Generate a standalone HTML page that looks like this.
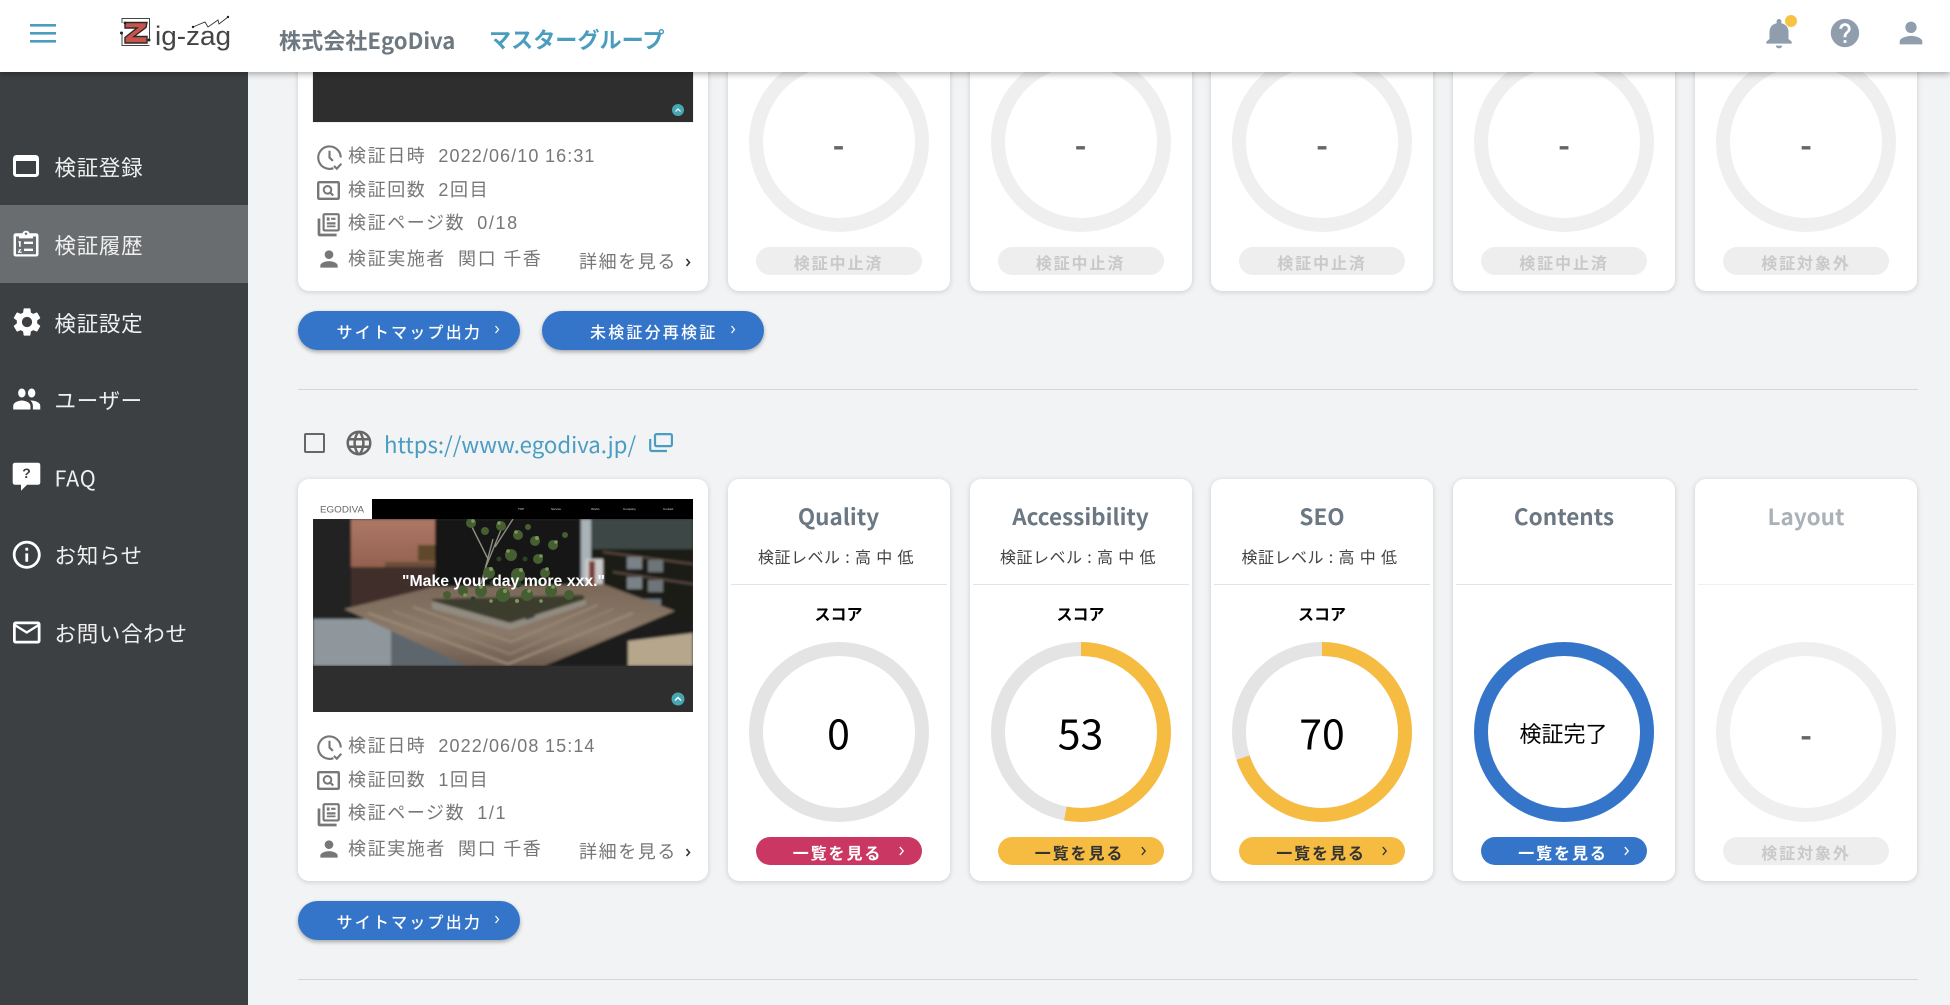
<!DOCTYPE html>
<html lang="ja"><head><meta charset="utf-8"><title>Zig-zag</title>
<style>
*{box-sizing:border-box}
html,body{margin:0;padding:0;width:1950px;height:1005px;overflow:hidden;background:#f1f3f5;font-family:"Noto Sans CJK JP","Liberation Sans",sans-serif}
.t{position:absolute;white-space:nowrap;line-height:1;transform:translateY(-50%)}
.c{position:absolute;white-space:nowrap;line-height:1;transform:translate(-50%,-50%)}
svg{position:absolute;display:block;overflow:visible}
#hdr{position:absolute;left:0;top:0;width:1950px;height:72px;background:#fff;box-shadow:0 2px 6px rgba(0,0,0,.32);z-index:5}
#side{position:absolute;left:0;top:72px;width:248px;height:933px;background:#3c4043;z-index:4}
#act{position:absolute;left:0;top:133px;width:248px;height:78px;background:#6a6d70}
.m{color:#f0f0f0;font-size:21.5px;letter-spacing:.7px;left:54.5px}
.card{position:absolute;width:222px;height:402px;background:#fff;border-radius:11px;box-shadow:0 1px 6px rgba(0,0,0,.16)}
.ti{left:111px;top:37px;font-size:22.5px;font-weight:700;color:#6b7883}
.lv{left:108.5px;top:77px;font-size:16px;color:#444;letter-spacing:.5px;word-spacing:.7px}
.dv{position:absolute;left:3px;top:105px;width:216px;height:1px;background:#e2e3e5}
.sc{left:111px;top:134px;font-size:16px;font-weight:700;color:#000}
.num{left:111px;top:253px;font-size:41px;color:#000}
.dash{left:111px;top:255px;font-size:32px;font-weight:700;color:#666}
.pill{position:absolute;left:28px;top:358px;width:166px;height:28px;border-radius:14px;color:#fff}
.pill .x{position:absolute;left:82px;top:15px;font-size:16px;font-weight:700;letter-spacing:1.9px;line-height:1;white-space:nowrap;transform:translate(-50%,-50%)}
.pill .a{position:absolute;left:142px;top:9px}
.off{background:#eee;color:#c9c9c9}
.off .x{left:83px}
.inf{left:348px;color:#777;font-size:18px;letter-spacing:1.6px;word-spacing:-.6px;font-family:"Liberation Sans","Noto Sans CJK JP",sans-serif}
.inf i{font-style:normal;letter-spacing:1.1px}
.btn{position:absolute;height:39px;border-radius:20px;background:#3575c9;box-shadow:0 2px 4px rgba(0,0,0,.32);color:#fff}
.btn span{position:absolute;top:20px;transform:translateY(-50%);font-size:16px;font-weight:500;letter-spacing:2.2px;line-height:1;white-space:nowrap}
.ln{position:absolute;left:298px;width:1620px;height:1px;background:#d5d7d9}
</style></head><body>

<!-- ===== TOP ROW ===== -->
<div class="card" style="left:298px;top:-111px;width:410px"></div>
<div style="position:absolute;left:313px;top:60px;width:380px;height:62px;background:#2e2e2e;box-shadow:0 0 1px rgba(0,0,0,.3)"><div style="position:absolute;left:0;top:0;width:380px;height:16px;background:linear-gradient(#3a342e,#2e2e2e)"></div><div style="position:absolute;left:359px;top:44px;width:12px;height:12px;border-radius:50%;background:#46a6b3"></div><svg style="left:362px;top:47.5px" width="6" height="4" viewBox="0 0 6 4" fill="none" stroke="#fff" stroke-width="1.2"><path d="M.5 3.500l2.500-2.500 2.500 2.500"/></svg></div>

<svg style="left:315.5px;top:143.500px" width="27" height="27" viewBox="0 0 24 24" fill="none" stroke="#777" stroke-width="1.9"><path d="M15.500 21.500A10 10 0 1 1 22 12"/><path d="M12 6v6l3 3"/><path d="M16 19.500l2.500 2.500 4-4.500"/></svg>
<svg style="left:317px;top:181px" width="23" height="19" viewBox="0 0 23 19" fill="none" stroke="#777"><rect x="1.200" y="1.200" width="20.600" height="16.600" rx="1" stroke-width="2.400"/><circle cx="10.500" cy="8.800" r="3.800" stroke-width="2"/><path d="M13.200 11.500l3 3" stroke-width="2.200"/></svg>
<svg style="left:316px;top:211.500px" width="26" height="26" viewBox="0 0 24 24"><path fill="#777" d="M4 6H1.500v14.500c0 1.100.9 2 2 2H19V20H4V6zm16-5H8c-1.100 0-2 .9-2 2v13c0 1.100.9 2 2 2h12c1.100 0 2-.9 2-2V3c0-1.100-.9-2-2-2zm0 15H8V3h12v13zM10 5h2.500v3H10zm4 .3h4v2h-4zM10 9.500h8v2h-8zm0 3h8v1.600h-8z"/></svg>
<svg style="left:316px;top:246px" width="26" height="26" viewBox="0 0 24 24"><path fill="#777" d="M12 12c2.210 0 4-1.790 4-4s-1.790-4-4-4-4 1.790-4 4 1.790 4 4 4zm0 2c-2.670 0-8 1.340-8 4v2h16v-2c0-2.660-5.330-4-8-4z"/></svg>
<div class="t inf" style="top:156px">検証日時&nbsp; <i>2022/06/10 16:31</i></div>
<div class="t inf" style="top:189.500px">検証回数&nbsp; 2回目</div>
<div class="t inf" style="top:222.500px">検証ページ数&nbsp; 0/18</div>
<div class="t inf" style="top:259px">検証実施者&nbsp; 関口 千香</div>
<div class="t inf" style="left:579px;top:262px">詳細を見る</div>
<svg style="left:685px;top:258px" width="6" height="9" viewBox="0 0 6 9" fill="none" stroke="#333" stroke-width="1.600"><path d="M1.500 1l3 3.500-3 3.500"/></svg>

<div class="card" style="left:727.500px;top:-111px"><svg style="left:21px;top:163px" width="180" height="180"><circle cx="90" cy="90" r="83" fill="none" stroke="#efefef" stroke-width="14"/></svg><div class="c dash">-</div><div class="pill off"><div class="x">検証中止済</div></div></div>
<div class="card" style="left:969.500px;top:-111px"><svg style="left:21px;top:163px" width="180" height="180"><circle cx="90" cy="90" r="83" fill="none" stroke="#efefef" stroke-width="14"/></svg><div class="c dash">-</div><div class="pill off"><div class="x">検証中止済</div></div></div>
<div class="card" style="left:1211px;top:-111px"><svg style="left:21px;top:163px" width="180" height="180"><circle cx="90" cy="90" r="83" fill="none" stroke="#efefef" stroke-width="14"/></svg><div class="c dash">-</div><div class="pill off"><div class="x">検証中止済</div></div></div>
<div class="card" style="left:1453px;top:-111px"><svg style="left:21px;top:163px" width="180" height="180"><circle cx="90" cy="90" r="83" fill="none" stroke="#efefef" stroke-width="14"/></svg><div class="c dash">-</div><div class="pill off"><div class="x">検証中止済</div></div></div>
<div class="card" style="left:1695px;top:-111px"><svg style="left:21px;top:163px" width="180" height="180"><circle cx="90" cy="90" r="83" fill="none" stroke="#efefef" stroke-width="14"/></svg><div class="c dash">-</div><div class="pill off"><div class="x">検証対象外</div></div></div>

<div class="btn" style="left:298px;top:311px;width:222px"><span style="left:38.500px">サイトマップ出力</span><svg style="left:196px;top:14px" width="6" height="9" viewBox="0 0 6 9" fill="none" stroke="#fff" stroke-width="1.200"><path d="M1.500 1l3 3.500-3 3.500"/></svg></div>
<div class="btn" style="left:542px;top:311px;width:222px"><span style="left:48px">未検証分再検証</span><svg style="left:188px;top:14px" width="6" height="9" viewBox="0 0 6 9" fill="none" stroke="#fff" stroke-width="1.200"><path d="M1.500 1l3 3.500-3 3.500"/></svg></div>
<div class="ln" style="top:389px"></div>

<!-- ===== URL ROW ===== -->
<div style="position:absolute;left:304px;top:433px;width:21px;height:20px;border:2.500px solid #666;border-radius:2px"></div>
<svg style="left:344px;top:428px" width="30" height="30" viewBox="0 0 24 24"><path fill="#666" d="M11.990 2C6.470 2 2 6.480 2 12s4.470 10 9.990 10C17.520 22 22 17.520 22 12S17.520 2 11.990 2zm6.930 6h-2.950c-.32-1.250-.78-2.450-1.380-3.560 1.840.63 3.370 1.910 4.330 3.560zM12 4.040c.83 1.200 1.480 2.530 1.910 3.960h-3.820c.43-1.430 1.080-2.760 1.910-3.960zM4.260 14C4.100 13.360 4 12.690 4 12s.1-1.360.26-2h3.380c-.08.66-.14 1.320-.14 2 0 .68.06 1.340.14 2H4.260zm.82 2h2.950c.32 1.250.78 2.450 1.380 3.560-1.840-.63-3.370-1.900-4.330-3.560zm2.950-8H5.080c.96-1.660 2.490-2.930 4.330-3.560C8.810 5.550 8.350 6.750 8.030 8zM12 19.960c-.83-1.200-1.480-2.530-1.910-3.960h3.820c-.43 1.430-1.080 2.760-1.910 3.960zM14.340 14H9.660c-.09-.66-.16-1.320-.16-2 0-.68.07-1.350.16-2h4.680c.09.65.16 1.320.16 2 0 .68-.07 1.340-.16 2zm.25 5.560c.6-1.110 1.060-2.310 1.380-3.560h2.950c-.96 1.650-2.490 2.930-4.330 3.560zM16.360 14c.08-.66.14-1.320.14-2 0-.68-.06-1.340-.14-2h3.380c.16.64.26 1.310.26 2s-.1 1.360-.26 2h-3.380z"/></svg>
<div class="t" style="left:384px;top:444px;font-size:22.200px;color:#4b9dc0">https://www.egodiva.jp/</div>
<svg style="left:649px;top:433px" width="24" height="20" viewBox="0 0 24 20" fill="none" stroke="#4b9dc0" stroke-width="2.200"><rect x="6" y="1.100" width="16.900" height="12" rx="1.500"/><path d="M1.200 6v10.500c0 1 .8 1.500 1.500 1.500H18"/></svg>

<!-- ===== BOTTOM ROW ===== -->
<div class="card" style="left:298px;top:479px;width:410px"></div>
<svg style="left:313px;top:499px" width="380" height="213" viewBox="0 0 380 213">
<defs><filter id="b"><feGaussianBlur stdDeviation="1.200"/></filter><filter id="b2"><feGaussianBlur stdDeviation=".35"/></filter><linearGradient id="tb" x1="0" y1="0" x2="0" y2="1"><stop offset="0" stop-color="#7a6858"/><stop offset=".6" stop-color="#8b7969"/><stop offset="1" stop-color="#6d5c4f"/></linearGradient><linearGradient id="wl" x1="0" y1="0" x2="0" y2="1"><stop offset="0" stop-color="#ad7766"/><stop offset="1" stop-color="#94614f"/></linearGradient><clipPath id="cp"><rect x="0" y="20" width="380" height="147"/></clipPath></defs>
<rect width="380" height="213" fill="#2e2e2e"/>
<g clip-path="url(#cp)"><g filter="url(#b)">
<rect y="20" width="380" height="147" fill="#1e1b1a"/>
<rect x="0" y="20" width="38" height="100" fill="#232324"/>
<rect x="38" y="20" width="84" height="48" fill="url(#wl)"/>
<rect x="38" y="68" width="84" height="40" fill="#3f2f2a"/>
<rect x="105" y="46" width="29" height="16" fill="#5e4a2a"/>
<rect x="72" y="63" width="70" height="5" fill="#6a4f38"/>
<rect x="122" y="20" width="146" height="70" fill="#171615"/>
<rect x="268" y="20" width="10" height="62" fill="#a9b2b7"/>
<rect x="278" y="20" width="102" height="38" fill="#3c4745"/>
<rect x="278" y="50" width="102" height="70" fill="#1c1a19"/>
<rect x="272" y="60" width="18" height="26" fill="#c9c9c9"/><rect x="276" y="62" width="6" height="24" fill="#7a3a35"/>
<path d="M290 52l90 12v2l-90-12zM300 72l80 12v2l-80-12z" fill="#5a4a40"/>
<rect x="314" y="58" width="15" height="12" fill="#7a8287"/><rect x="335" y="61" width="15" height="12" fill="#6e7478"/><rect x="314" y="78" width="15" height="12" fill="#7a8287"/><rect x="335" y="81" width="15" height="12" fill="#6e7478"/><rect x="330" y="100" width="18" height="8" fill="#6e7478"/>
<path d="M0 120l78 0 0 47-78 0z" fill="#8f979c"/>
<path d="M78 128l80 39-80 0z" fill="#5d666c"/>
<path d="M315 142l65-8v33h-65z" fill="#b5a68c"/>
<path d="M31 110L120 88 290 85 362 112 231 167 154 167z" fill="url(#tb)"/>
<path d="M55 114L195 165 320 114" fill="none" stroke="#9a8874" stroke-width="2.500"/>
<path d="M80 112L197 155 300 110" fill="none" stroke="#928170" stroke-width="2"/>
<path d="M100 108L198 143 285 106" fill="none" stroke="#9a8874" stroke-width="2"/>
<path d="M119 100L270 96 273 103 197 131 120 108z" fill="#3e3c2e"/>
<path d="M119 102L197 124 273 100 273 106 197 131 119 110z" fill="#918b80"/>
<path d="M150 101l8 3-1 3-8-3zM165 107l10 3-1 3-10-3zM212 118l9-3 1 3-9 3z" fill="#3a3a36"/>
</g>
<g filter="url(#b2)">
<path d="M168 85L180 40M175 60L155 20M182 48L200 20M172 70L190 26" stroke="#8f8f80" stroke-width="1.400" fill="none"/>
<g fill="#445f33"><circle cx="158" cy="24" r="5"/><circle cx="172" cy="32" r="4"/><circle cx="188" cy="27" r="5"/><circle cx="205" cy="36" r="5"/><circle cx="222" cy="42" r="5"/><circle cx="240" cy="46" r="5"/><circle cx="252" cy="36" r="3"/><circle cx="215" cy="28" r="3"/><circle cx="198" cy="56" r="6"/><circle cx="225" cy="60" r="5"/><circle cx="176" cy="74" r="6"/><circle cx="205" cy="76" r="7"/><circle cx="232" cy="74" r="5"/><circle cx="150" cy="92" r="5"/><circle cx="168" cy="92" r="6"/><circle cx="190" cy="96" r="7"/><circle cx="214" cy="96" r="6"/><circle cx="238" cy="92" r="6"/><circle cx="256" cy="96" r="5"/><circle cx="134" cy="96" r="4"/></g>
<g fill="#7a9a55"><circle cx="160" cy="22" r="1.800"/><circle cx="186" cy="24" r="1.800"/><circle cx="203" cy="33" r="1.800"/><circle cx="224" cy="39" r="2"/><circle cx="243" cy="43" r="1.800"/><circle cx="195" cy="52" r="1.800"/><circle cx="228" cy="57" r="1.800"/><circle cx="178" cy="70" r="2"/><circle cx="208" cy="71" r="2"/><circle cx="234" cy="70" r="1.800"/><circle cx="168" cy="88" r="1.800"/><circle cx="192" cy="92" r="2"/><circle cx="216" cy="92" r="1.800"/><circle cx="240" cy="88" r="1.800"/><circle cx="152" cy="96" r="1.800"/><circle cx="204" cy="102" r="2"/><circle cx="178" cy="102" r="1.800"/><circle cx="228" cy="102" r="1.800"/></g>
<g fill="#2b4326"><circle cx="205" cy="85" r="3.500"/><circle cx="180" cy="84" r="3"/><circle cx="226" cy="84" r="3"/><circle cx="160" cy="100" r="2.500"/><circle cx="212" cy="60" r="2.500"/><circle cx="186" cy="60" r="2.500"/></g>
</g></g>
<rect width="380" height="20" fill="#000"/>
<rect width="59" height="20" fill="#fff"/>
<text x="7" y="13.500" font-family="Liberation Sans" font-size="9" fill="#666" textLength="44" lengthAdjust="spacingAndGlyphs">EGODIVA</text>
<g font-family="Liberation Sans" font-size="3" fill="#ddd"><text x="205" y="11">TOP</text><text x="238" y="11">Service</text><text x="278" y="11">Works</text><text x="310" y="11">Company</text><text x="350" y="11">Contact</text></g>
<text x="190.500" y="87" text-anchor="middle" font-family="Liberation Sans" font-size="16" font-weight="700" fill="#fff" textLength="203" lengthAdjust="spacingAndGlyphs">"Make your day more xxx."</text>
<circle cx="365" cy="200" r="6.500" fill="#46a6b3"/><path d="M362 201.500l3-3 3 3" fill="none" stroke="#fff" stroke-width="1.400"/>
</svg>

<svg style="left:315.500px;top:733.500px" width="27" height="27" viewBox="0 0 24 24" fill="none" stroke="#777" stroke-width="1.900"><path d="M15.500 21.500A10 10 0 1 1 22 12"/><path d="M12 6v6l3 3"/><path d="M16 19.500l2.500 2.500 4-4.500"/></svg>
<svg style="left:317px;top:771px" width="23" height="19" viewBox="0 0 23 19" fill="none" stroke="#777"><rect x="1.200" y="1.200" width="20.600" height="16.600" rx="1" stroke-width="2.400"/><circle cx="10.500" cy="8.800" r="3.800" stroke-width="2"/><path d="M13.200 11.500l3 3" stroke-width="2.200"/></svg>
<svg style="left:316px;top:801.500px" width="26" height="26" viewBox="0 0 24 24"><path fill="#777" d="M4 6H1.500v14.500c0 1.100.9 2 2 2H19V20H4V6zm16-5H8c-1.100 0-2 .9-2 2v13c0 1.100.9 2 2 2h12c1.100 0 2-.9 2-2V3c0-1.100-.9-2-2-2zm0 15H8V3h12v13zM10 5h2.500v3H10zm4 .3h4v2h-4zM10 9.500h8v2h-8zm0 3h8v1.600h-8z"/></svg>
<svg style="left:316px;top:836px" width="26" height="26" viewBox="0 0 24 24"><path fill="#777" d="M12 12c2.210 0 4-1.790 4-4s-1.790-4-4-4-4 1.790-4 4 1.790 4 4 4zm0 2c-2.670 0-8 1.340-8 4v2h16v-2c0-2.660-5.330-4-8-4z"/></svg>
<div class="t inf" style="top:746px">検証日時&nbsp; <i>2022/06/08 15:14</i></div>
<div class="t inf" style="top:779.500px">検証回数&nbsp; 1回目</div>
<div class="t inf" style="top:812.500px">検証ページ数&nbsp; 1/1</div>
<div class="t inf" style="top:849px">検証実施者&nbsp; 関口 千香</div>
<div class="t inf" style="left:579px;top:852px">詳細を見る</div>
<svg style="left:685px;top:848px" width="6" height="9" viewBox="0 0 6 9" fill="none" stroke="#333" stroke-width="1.600"><path d="M1.500 1l3 3.500-3 3.500"/></svg>

<!-- Quality -->
<div class="card" style="left:727.500px;top:479px"><div class="c ti">Quality</div><div class="c lv">検証レベル : 高 中 低</div><div class="dv"></div><div class="c sc">スコア</div>
<svg style="left:21px;top:163px" width="180" height="180"><circle cx="90" cy="90" r="83" fill="none" stroke="#e4e4e4" stroke-width="14"/></svg><div class="c num">0</div>
<div class="pill" style="background:#cb3763"><div class="x">一覧を見る</div><svg class="a" width="7" height="10" viewBox="0 0 6 9" fill="none" stroke="#fff" stroke-width="1.200"><path d="M1.500 1l3 3.500-3 3.500"/></svg></div></div>
<!-- Accessibility -->
<div class="card" style="left:969.500px;top:479px"><div class="c ti">Accessibility</div><div class="c lv">検証レベル : 高 中 低</div><div class="dv"></div><div class="c sc">スコア</div>
<svg style="left:21px;top:163px" width="180" height="180"><circle cx="90" cy="90" r="83" fill="none" stroke="#e4e4e4" stroke-width="14"/><circle cx="90" cy="90" r="83" fill="none" stroke="#f6bc42" stroke-width="14" stroke-dasharray="276.400 245.100" transform="rotate(-90 90 90)"/></svg><div class="c num">53</div>
<div class="pill" style="background:#f6bc42;color:#333"><div class="x">一覧を見る</div><svg class="a" width="7" height="10" viewBox="0 0 6 9" fill="none" stroke="#333" stroke-width="1.200"><path d="M1.500 1l3 3.500-3 3.500"/></svg></div></div>
<!-- SEO -->
<div class="card" style="left:1211px;top:479px"><div class="c ti">SEO</div><div class="c lv">検証レベル : 高 中 低</div><div class="dv"></div><div class="c sc">スコア</div>
<svg style="left:21px;top:163px" width="180" height="180"><circle cx="90" cy="90" r="83" fill="none" stroke="#e4e4e4" stroke-width="14"/><circle cx="90" cy="90" r="83" fill="none" stroke="#f6bc42" stroke-width="14" stroke-dasharray="365 156.500" transform="rotate(-90 90 90)"/></svg><div class="c num">70</div>
<div class="pill" style="background:#f6bc42;color:#333"><div class="x">一覧を見る</div><svg class="a" width="7" height="10" viewBox="0 0 6 9" fill="none" stroke="#333" stroke-width="1.200"><path d="M1.500 1l3 3.500-3 3.500"/></svg></div></div>
<!-- Contents -->
<div class="card" style="left:1453px;top:479px"><div class="c ti">Contents</div><div class="dv"></div>
<svg style="left:21px;top:163px" width="180" height="180"><circle cx="90" cy="90" r="83" fill="none" stroke="#3575c9" stroke-width="14"/></svg><div class="c" style="left:110.500px;top:254px;font-size:22px;color:#000">検証完了</div>
<div class="pill" style="background:#3575c9"><div class="x">一覧を見る</div><svg class="a" width="7" height="10" viewBox="0 0 6 9" fill="none" stroke="#fff" stroke-width="1.200"><path d="M1.500 1l3 3.500-3 3.500"/></svg></div></div>
<!-- Layout -->
<div class="card" style="left:1695px;top:479px"><div class="c ti" style="color:#aab1b7">Layout</div><div class="dv" style="background:#eeeff0"></div>
<svg style="left:21px;top:163px" width="180" height="180"><circle cx="90" cy="90" r="83" fill="none" stroke="#efefef" stroke-width="14"/></svg><div class="c dash">-</div>
<div class="pill off"><div class="x">検証対象外</div></div></div>

<div class="btn" style="left:298px;top:901px;width:222px"><span style="left:38.500px">サイトマップ出力</span><svg style="left:196px;top:14px" width="6" height="9" viewBox="0 0 6 9" fill="none" stroke="#fff" stroke-width="1.200"><path d="M1.500 1l3 3.500-3 3.500"/></svg></div>
<div class="ln" style="top:979px"></div>

<!-- ===== HEADER ===== -->
<div id="hdr">
<svg style="left:30px;top:24px" width="26" height="19" viewBox="0 0 26 19" fill="#4b9dc0"><rect y="0" width="26" height="2.600"/><rect y="8" width="26" height="2.600"/><rect y="16" width="26" height="2.600"/></svg>
<svg style="left:118px;top:14px" width="116" height="38" viewBox="0 0 116 38" fill="none">
<path d="M4 9V4.500h27.500V27M31.500 31.500H4V20" stroke="#444" stroke-width="1"/>
<path d="M7 8.500h22l-1 5-12 9h13v6.500H7v-5.500l12-9.500H7z" fill="#c9544a" stroke="#2a2a2a" stroke-width="1.400"/>
<circle cx="3.500" cy="19" r="1.500" fill="#222"/><circle cx="31" cy="26" r="1.500" fill="#222"/><circle cx="7" cy="9" r="1.400" fill="#222"/>
<text x="37" y="31" font-family="Liberation Sans" font-size="27" fill="#444" textLength="76" lengthAdjust="spacingAndGlyphs">ig-zag</text>
<path d="M75 13l12-5 3 5 10-7 1 4 9-7" stroke="#333" stroke-width=".9"/><circle cx="75" cy="13" r="1.200" fill="#222"/><circle cx="110" cy="3" r="1.200" fill="#222"/>
</svg>
<div class="t" style="left:279px;top:39.500px;font-size:22.100px;font-weight:700;color:#6d7881">株式会社EgoDiva</div>
<div class="t" style="left:489px;top:39px;font-size:22.100px;font-weight:700;color:#4b9dc0">マスターグループ</div>
<svg style="left:1760px;top:17px" width="38" height="32" viewBox="0 0 24 24" preserveAspectRatio="none"><path fill="#8f9dad" d="M12 23.500c1.100 0 2-.9 2-2h-4c0 1.100.89 2 2 2zm6-7v-5.500c0-3.070-1.640-5.640-4.500-6.320V3c0-.83-.67-1.500-1.500-1.500s-1.500.67-1.500 1.500v1.680C7.630 5.360 6 7.920 6 11v5.500l-2 2V20h16v-1.500l-2-2z"/></svg>
<div style="position:absolute;left:1785px;top:15px;width:12px;height:12px;border-radius:50%;background:#f6c343"></div>
<svg style="left:1828px;top:16px" width="34" height="34" viewBox="0 0 24 24"><path fill="#8f9dad" d="M12 2C6.480 2 2 6.480 2 12s4.480 10 10 10 10-4.480 10-10S17.520 2 12 2zm1 17h-2v-2h2v2zm2.070-7.750l-.9.92C13.450 12.900 13 13.500 13 15h-2v-.5c0-1.100.45-2.100 1.170-2.830l1.240-1.260c.37-.36.59-.86.59-1.410 0-1.100-.9-2-2-2s-2 .9-2 2H8c0-2.210 1.790-4 4-4s4 1.790 4 4c0 .88-.36 1.680-.93 2.250z"/></svg>
<svg style="left:1894px;top:16px" width="34" height="34" viewBox="0 0 24 24"><path fill="#8f9dad" d="M12 12c2.210 0 4-1.790 4-4s-1.790-4-4-4-4 1.790-4 4 1.790 4 4 4zm0 2c-2.670 0-8 1.340-8 4v2h16v-2c0-2.660-5.330-4-8-4z"/></svg>
</div>

<!-- ===== SIDEBAR ===== -->
<div id="side">
<div id="act"></div>
<svg style="left:13px;top:83px" width="26" height="22" viewBox="0 0 26 22" fill="none" stroke="#fff" stroke-width="3"><rect x="1.500" y="1.500" width="23" height="19" rx="2"/><path d="M1.500 4.500h23" stroke-width="3"/></svg>
<svg style="left:13px;top:158px" width="26" height="27" viewBox="0 0 26 29" preserveAspectRatio="none"><path fill="#fff" fill-rule="evenodd" d="M3 3.500h6.500a3.600 3.600 0 0 1 7 0H23c1.500 0 2.500 1 2.500 2.500v20c0 1.500-1 2.500-2.500 2.500H3C1.500 28.500.5 27.500.5 26V6C.5 4.500 1.500 3.500 3 3.500zM13 2.700a1.300 1.300 0 1 0 0 2.600 1.300 1.300 0 0 0 0-2.600zM3 7v19h20V7h-3v2H6V7z"/><path fill="#fff" d="M11 12.500h9v2.500h-9zM11 20h9v2.500h-9zM5.500 12h2.200v6H6v-4.300h-.5zM5 20.500h3.500l-1.900 2.700H8.800v1.300H5v-1.200l1.700-2.500H5z"/></svg>
<svg style="left:9.500px;top:233px" width="34" height="34" viewBox="0 0 24 24"><path fill="#fff" d="M19.140 12.940c.04-.3.060-.61.060-.94 0-.32-.02-.64-.07-.94l2.030-1.580c.18-.14.23-.41.12-.61l-1.920-3.320c-.12-.22-.37-.29-.59-.22l-2.390.96c-.5-.38-1.030-.7-1.620-.94l-.36-2.540c-.04-.24-.24-.41-.48-.41h-3.840c-.24 0-.43.17-.47.41l-.36 2.540c-.59.24-1.130.57-1.620.94l-2.390-.96c-.22-.08-.47 0-.59.22L2.740 8.870c-.12.21-.08.47.12.61l2.030 1.580c-.05.3-.09.63-.09.94s.02.64.07.94l-2.030 1.580c-.18.14-.23.41-.12.61l1.920 3.320c.12.22.37.29.59.22l2.390-.96c.5.38 1.030.7 1.620.94l.36 2.540c.05.24.24.41.48.41h3.840c.24 0 .44-.17.47-.41l.36-2.540c.59-.24 1.130-.56 1.620-.94l2.390.96c.22.08.47 0 .59-.22l1.920-3.320c.12-.22.07-.47-.12-.61l-2.010-1.580zM12 15.600c-1.980 0-3.600-1.620-3.600-3.600s1.620-3.600 3.600-3.600 3.600 1.620 3.600 3.600-1.620 3.600-3.600 3.600z"/></svg>
<svg style="left:12px;top:308.500px" width="29.500" height="36" viewBox="0 0 24 24" preserveAspectRatio="none"><path fill="#fff" d="M16 11c1.660 0 2.990-1.340 2.990-3S17.660 5 16 5c-1.660 0-3 1.340-3 3s1.340 3 3 3zm-8 0c1.660 0 2.990-1.340 2.990-3S9.660 5 8 5C6.340 5 5 6.340 5 8s1.340 3 3 3zm0 2c-2.330 0-7 1.170-7 3.500V19h14v-2.500c0-2.330-4.670-3.500-7-3.500zm8 0c-.29 0-.62.02-.97.05 1.160.84 1.970 1.970 1.970 3.450V19h6v-2.500c0-2.330-4.670-3.500-7-3.500z"/></svg>
<svg style="left:12px;top:390px" width="29" height="30" viewBox="0 0 29 30"><path fill="#fff" d="M3 .7h23c1.300 0 2.300 1 2.300 2.300v17.500c0 1.300-1 2.300-2.300 2.300H15l-6 6v-6H3c-1.300 0-2.300-1-2.300-2.300V3C.7 1.700 1.700.7 3 .7z"/><text x="14.500" y="16" text-anchor="middle" font-family="Liberation Sans" font-size="14" font-weight="700" fill="#3c4043">?</text></svg>
<svg style="left:9.500px;top:466px" width="33.500" height="33.500" viewBox="0 0 24 24"><path fill="#fff" d="M11 7h2v2h-2zm0 4h2v6h-2zm1-9C6.480 2 2 6.480 2 12s4.480 10 10 10 10-4.480 10-10S17.520 2 12 2zm0 18c-4.410 0-8-3.590-8-8s3.590-8 8-8 8 3.590 8 8-3.590 8-8 8z"/></svg>
<svg style="left:9.500px;top:543.500px" width="33.500" height="33" viewBox="0 0 24 24"><path fill="#fff" d="M20 4H4c-1.100 0-1.990.9-1.990 2L2 18c0 1.100.9 2 2 2h16c1.100 0 2-.9 2-2V6c0-1.100-.9-2-2-2zm0 14H4V8l8 5 8-5v10zm-8-7L4 6h16l-8 5z"/></svg>
<div class="t m" style="top:94.800px">検証登録</div>
<div class="t m" style="top:172.800px">検証履歴</div>
<div class="t m" style="top:250.500px">検証設定</div>
<div class="t m" style="top:328.300px">ユーザー</div>
<div class="t m" style="top:405.800px">FAQ</div>
<div class="t m" style="top:483.300px">お知らせ</div>
<div class="t m" style="top:561.300px">お問い合わせ</div>
</div>
</body></html>
